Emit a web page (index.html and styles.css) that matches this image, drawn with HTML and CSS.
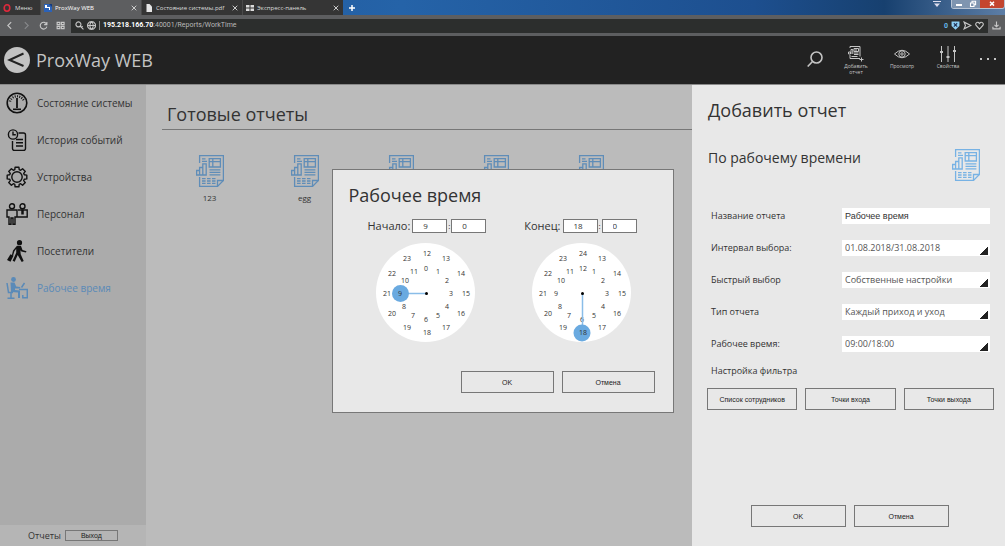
FILE: index.html
```html
<!DOCTYPE html>
<html lang="ru">
<head>
<meta charset="utf-8">
<title>ProxWay WEB</title>
<link rel="stylesheet" href="styles.css">
</head>
<body>
<svg class="defs" aria-hidden="true">
  <symbol id="report" viewBox="0 0 28 32">
    <g fill="none" stroke="currentColor" stroke-width="1.3">
      <path d="M3.6 8V.6H27.4V25.5L21.5 31.4H3.6V22"/>
      <path d="M27.4 25.5H21.5V31.4"/>
      <path d="M13.2 3.6H24.4V12H13.2zM16.8 3.6V12M13.2 6.6H24.4"/>
      <path d="M13.5 14.8H24.4M13.5 17.3H24.4M13.5 19.8H24.4"/>
      <path d="M.6 20V15.5H3.6V20zM3.6 20V12.5H6.8V20zM6.8 20V8.8H10.2V20z"/>
      <path d="M6 3.8H9.5M6 6.3H11"/>
      <path d="M6 23.6H19.5M6 26H19.5M6 28.4H19.5" stroke-dasharray="3.6 1.4"/>
    </g>
  </symbol>
</svg>

<div class="tabs">
  <button class="tab menu"><svg class="i8" viewBox="0 0 8 8"><ellipse cx="4" cy="4" rx="2.8" ry="3.2" fill="none" stroke="#e0293c" stroke-width="1.6"/></svg>Меню</button>
  <div class="tab active">
    <svg class="i8" viewBox="0 0 8 8"><rect width="8" height="8" fill="#2b62b8"/><path d="M1 1h2v2h3v3H5V4H1z" fill="#fff"/><path d="M5 0h3v3z" fill="#133a80"/></svg>
    <span class="name">ProxWay WEB</span><button class="x" aria-label="Закрыть вкладку"><svg viewBox="0 0 6 6"><path d="M.7.7l4.6 4.6M5.3.7L.7 5.3"/></svg></button>
  </div>
  <div class="tab">
    <svg class="i8" viewBox="0 0 8 8"><path d="M1.5 0h3L7 2.5V8H1.5z" fill="#e6e6e6"/></svg>
    <span class="name">Состояние системы.pdf</span><button class="x" aria-label="Закрыть вкладку"><svg viewBox="0 0 6 6"><path d="M.7.7l4.6 4.6M5.3.7L.7 5.3"/></svg></button>
  </div>
  <div class="tab">
    <svg class="i8" viewBox="0 0 8 8"><path d="M0 1h3.5v2.5H0zM4.5 1H8v2.5H4.5zM0 4.5h3.5V7H0zM4.5 4.5H8V7H4.5z" fill="#ddd"/></svg>
    <span class="name">Экспресс-панель</span><button class="x" aria-label="Закрыть вкладку"><svg viewBox="0 0 6 6"><path d="M.7.7l4.6 4.6M5.3.7L.7 5.3"/></svg></button>
  </div>
  <button class="plus" aria-label="Новая вкладка"><svg viewBox="0 0 6 6"><path d="M3 0v6M0 3h6" stroke="#fff" stroke-width="1.5"/></svg></button>
  <div class="window-controls">
    <svg class="tab-menu" viewBox="0 0 8 8"><path d="M0 1.5h8" stroke="#dde" /><path d="M1 3.4h6L4 7z" fill="#dde"/></svg>
    <div class="wbtns">
      <button aria-label="Свернуть"><svg viewBox="0 0 8 8"><path d="M1 5h6" stroke="#fff" stroke-width="2"/></svg></button>
      <button aria-label="Развернуть"><svg viewBox="0 0 8 8"><path d="M1.5 3h3.5v3.5H1.5zM3 3V1.2h3.6v3.6H5" fill="none" stroke="#fff" stroke-width="1.1"/></svg></button>
      <button class="close" aria-label="Закрыть"><svg viewBox="0 0 8 8"><path d="M2 1.8l4 3.8M6 1.8L2 5.6" stroke="#fff" stroke-width="1.5"/></svg></button>
    </div>
  </div>
</div>

<div class="address">
  <button class="nav" aria-label="Назад"><svg viewBox="0 0 8 8"><path d="M5.5 1L2.5 4l3 3"/></svg></button>
  <button class="nav dim" aria-label="Вперёд"><svg viewBox="0 0 8 8"><path d="M2.5 1l3 3-3 3"/></svg></button>
  <button class="nav" aria-label="Обновить"><svg viewBox="0 0 8 8"><path d="M6.8 2.8A3 3 0 1 0 7 5M7 .8v2.4H4.6"/></svg></button>
  <button class="nav" aria-label="Экспресс-панель"><svg viewBox="0 0 8 8"><path d="M1 1.2h2.4v2H1zM4.8 1.2h2.4v2H4.8zM1 4.8h2.4v2H1zM4.8 4.8h2.4v2H4.8z"/></svg></button>
  <div class="url">
    <svg class="i8" viewBox="0 0 8 8"><path d="M3 .8a2.2 2.2 0 1 0 .1 0zM4.5 4.5l3 3M5.6 5.6L6.8 4.7"/></svg>
    <svg class="i8" viewBox="0 0 8 8"><path d="M4 .5a3.5 3.5 0 1 0 .1 0zM.5 4h7M4 .5C2 2.5 2 5.5 4 7.5C6 5.5 6 2.5 4 .5"/></svg>
    <span class="addr"><b>195.218.166.70</b>:40001/Reports/WorkTime</span>
    <span class="blocked">0</span>
    <svg class="i8" viewBox="0 0 8 8"><path class="shield" d="M.5.5h7v4L4 7.8.5 4.5z"/><path d="M2.500 2l3 3M5.500 2l-3 3" stroke="#235"/></svg>
    <svg class="i8" viewBox="0 0 8 8"><path d="M1 1l6 3-6 3 1.200-3z"/></svg>
    <svg class="i8" viewBox="0 0 8 8"><path d="M4 7.200L1 4C-.4 2 2.500-.2 4 2.200C5.500-.2 8.400 2 7 4z"/></svg>
  </div>
  <button class="nav" aria-label="Загрузки"><svg viewBox="0 0 8 8"><path d="M4 .5v4.500M2.200 3.500L4 5.200l1.800-1.700M.8 5v2h6.400V5"/></svg></button>
</div>

<div class="app">
  <header class="header">
    <a class="brand" href="#">
      <svg viewBox="0 0 26 26"><circle cx="13" cy="13" r="13" fill="#c2c2c2"/><path d="M19.500 6.500L5.500 13l14 6" fill="none" stroke="#222" stroke-width="2"/></svg>
      <span>ProxWay WEB</span>
    </a>
    <nav class="tools">
      <button class="tool search" aria-label="Поиск"><svg viewBox="0 0 16 16"><circle cx="9.500" cy="6.500" r="5.500"/><path d="M5.500 10.500L.7 15.500"/></svg></button>
      <button class="tool"><svg viewBox="0 0 16 16"><path d="M2 2V.5h10v10M12 12.500H2V9M.5 8V6h2v2zM3 8V3.500h1.800V8M6 2.500h4.500v3H6zM8 2.500v3M6 7h4.500M6 8.500h4.500M3.500 10.500h6M13.500 11.500v4M11.500 13.500h4"/></svg><span>Добавить<br>отчет</span></button>
      <button class="tool"><svg viewBox="0 0 16 16"><path d="M.5 8Q8 .5 15.500 8Q8 15.500.5 8z"/><circle cx="8" cy="8" r="3.200"/><circle cx="8" cy="8" r="1.200"/></svg><span>Просмотр</span></button>
      <button class="tool"><svg viewBox="0 0 16 16"><path d="M1.500 0v16M8 0v16M14.500 0v16"/><path d="M0 6h3M6.500 11h3M13 5h3" stroke-width="2"/></svg><span>Свойства</span></button>
      <button class="tool more" aria-label="Ещё"><svg viewBox="0 0 16 16"><path d="M0 7h2v2H0zM7 7h2v2H7zM14 7h2v2h-2z"/></svg></button>
    </nav>
  </header>

  <div class="body">
    <aside class="sidebar">
      <nav class="links">
        <a href="#"><svg viewBox="0 0 22 22"><circle cx="11" cy="11" r="9.800" stroke-width="1.600"/><path d="M4 9.500A7.300 7.300 0 0 1 18 9.500" stroke-width="2.200" stroke-dasharray="1 1.300"/><path d="M11 6v10" stroke-width="1.800"/><path d="M7 17.300h8" stroke-width="1.600"/></svg>Состояние системы</a>
        <a href="#"><svg viewBox="0 0 22 22"><circle cx="7" cy="5.500" r="4.600"/><path d="M7 2.500v3.300h2.800M12.500 4h5q2 0 2 2v13.500q0 2-2 2h-9q-2 0-2-2V12M10 10.500h7M10 13.700h7M10 17h7"/></svg>История событий</a>
        <a href="#"><svg viewBox="0 0 22 22"><circle cx="11" cy="11" r="5.200"/><path stroke-linejoin="round" d="M18.300 8.800L20.800 9.100V12.900L18.300 13.200L17.700 14.600L19.300 16.600L16.600 19.300L14.600 17.700L13.200 18.300L12.900 20.800H9.100L8.800 18.300L7.400 17.700L5.400 19.300L2.700 16.600L4.300 14.600L3.700 13.200L1.200 12.900V9.100L3.700 8.800L4.300 7.400L2.700 5.400L5.400 2.700L7.400 4.300L8.800 3.700L9.100 1.200H12.900L13.200 3.700L14.600 4.300L16.600 2.700L19.300 5.400L17.700 7.400z"/></svg>Устройства</a>
        <a href="#"><svg viewBox="0 0 22 22"><circle cx="6" cy="3.200" r="2.500"/><circle cx="16.500" cy="3.200" r="2.500"/><path d="M3 21.200V14H1V7h10v7H9v7.200H7V15H5v6.200zM11.500 14h9.700V7h-9.200"/><path d="M16.500 6.500v5" stroke-width="2.500"/></svg>Персонал</a>
        <a href="#"><svg viewBox="0 0 22 22"><g fill="currentColor" stroke="none"><circle cx="13.500" cy="2.700" r="2.600"/><path d="M11 5.700l4 .4 1.500 4 4 1.200-.6 1.300-4.500-1-1-1.300.3 4 3 6.700-2 1-4-7-3 6.700-2.100-.9 3.600-8V8.700L8.300 11.500 7 16l-1.200-.4L7 10.500z"/><path d="M4.500 14.200l3 1.500-3 6L1 20z"/></g></svg>Посетители</a>
        <a class="current" href="#"><svg viewBox="0 0 22 22"><g fill="currentColor" stroke="none"><circle cx="7.500" cy="2.500" r="2.400"/><path d="M4.500 5.500h4l1.700 4 4 .6v1.500L9 11.500V13l5 .5v7.500h-2v-5.500L5 15z"/></g><path d="M1 6l1.500 9.500H7M5 16v5M1.500 21.200h7M15.500 10.500L18.500 6M13 12.500h8.300v8.300h-4.500V18" stroke-width="1.500"/></svg>Рабочее время</a>
      </nav>
      <div class="foot"><span>Отчеты</span><button class="btn">Выход</button></div>
    </aside>

    <main class="content">
      <h1>Готовые отчеты</h1>
      <div class="reports">
        <a href="#"><svg><use href="#report"/></svg>123</a>
        <a href="#"><svg><use href="#report"/></svg>egg</a>
        <a href="#" aria-label="Отчет"><svg><use href="#report"/></svg></a>
        <a href="#" aria-label="Отчет"><svg><use href="#report"/></svg></a>
        <a href="#" aria-label="Отчет"><svg><use href="#report"/></svg></a>
      </div>
    </main>

    <form class="panel">
      <h2>Добавить отчет</h2>
      <div class="kind"><h3>По рабочему времени</h3><svg><use href="#report"/></svg></div>
      <div class="fields">
        <label for="f1">Название отчета</label><input id="f1" type="text" value="Рабочее время">
        <label for="f2">Интервал выбора:</label><select id="f2"><option>01.08.2018/31.08.2018</option></select>
        <label for="f3">Быстрый выбор</label><select id="f3"><option>Собственные настройки</option></select>
        <label for="f4">Тип отчета</label><select id="f4"><option>Каждый приход и уход</option></select>
        <label for="f5">Рабочее время:</label><select id="f5"><option>09:00/18:00</option></select>
      </div>
      <p class="filter">Настройка фильтра</p>
      <div class="filters">
        <button class="btn" type="button">Список сотрудников</button>
        <button class="btn" type="button">Точки входа</button>
        <button class="btn" type="button">Точки выхода</button>
      </div>
      <div class="actions">
        <button class="btn" type="button">OK</button>
        <button class="btn" type="button">Отмена</button>
      </div>
    </form>
  </div>

  <div class="overlay">
    <form class="dialog" role="dialog" aria-labelledby="dt">
      <h2 id="dt">Рабочее время</h2>
      <div class="times">
        <div class="time">
          <div class="entry"><label for="h1">Начало:</label><input id="h1" value="9"><span>:</span><input aria-label="Минуты начала" value="0"></div>
          <svg class="clock" viewBox="0 0 99 99">
            <circle cx="49.500" cy="49.500" r="49.500" fill="#fff"/>
            <path class="hand" d="M50.500 50.500H25"/><circle class="pick" cx="24.500" cy="50.500" r="8.500"/><circle cx="50.500" cy="50.500" r="1.500"/>
            <text x="51" y="13">12</text><text x="70" y="18">13</text><text x="85" y="33">14</text><text x="90" y="53">15</text><text x="85" y="73">16</text><text x="70" y="87">17</text><text x="51" y="92">18</text><text x="31" y="87">19</text><text x="16" y="73">20</text><text x="11" y="53">21</text><text x="16" y="33">22</text><text x="31" y="18">23</text>
            <text x="50" y="28">0</text><text x="62" y="31">1</text><text x="71" y="40">2</text><text x="75" y="53">3</text><text x="71" y="66">4</text><text x="62" y="75">5</text><text x="50" y="79">6</text><text x="37" y="75">7</text><text x="28" y="66">8</text><text x="24" y="53">9</text><text x="29" y="40">10</text><text x="38" y="31">11</text>
          </svg>
        </div>
        <div class="time">
          <div class="entry"><label for="h2">Конец:</label><input id="h2" value="18"><span>:</span><input aria-label="Минуты конца" value="0"></div>
          <svg class="clock" viewBox="0 0 99 99">
            <circle cx="49.500" cy="49.500" r="49.500" fill="#fff"/>
            <text x="50" y="79">6</text>
            <path class="hand" d="M50.500 50.500V82"/><circle class="pick" cx="50" cy="90" r="8.500"/><circle cx="50.500" cy="50.500" r="1.500"/>
            <text x="51" y="13">24</text><text x="70" y="18">13</text><text x="85" y="33">14</text><text x="90" y="53">15</text><text x="85" y="73">16</text><text x="70" y="87">17</text><text x="51" y="92">18</text><text x="31" y="87">19</text><text x="16" y="73">20</text><text x="11" y="53">21</text><text x="16" y="33">22</text><text x="31" y="18">23</text>
            <text x="51" y="28">12</text><text x="62" y="31">1</text><text x="71" y="40">2</text><text x="75" y="53">3</text><text x="71" y="66">4</text><text x="62" y="75">5</text><text x="37" y="75">7</text><text x="28" y="66">8</text><text x="24" y="53">9</text><text x="29" y="40">10</text><text x="38" y="31">11</text>
          </svg>
        </div>
      </div>
      <div class="actions">
        <button class="btn" type="button">OK</button>
        <button class="btn" type="button">Отмена</button>
      </div>
    </form>
  </div>
</div>
</body>
</html>
```

FILE: styles.css
```css
* { box-sizing: border-box; }
body {
  margin: 0;
  height: 100vh;
  padding-bottom: 2px;
  display: flex;
  flex-direction: column;
  overflow: hidden;
  background: #fff;
  color: #333;
  font-family: "Open Sans", "Noto Sans", sans-serif;
}
button, input, select { font-family: inherit; margin: 0; padding: 0; border: 0; border-radius: 0; background: none; color: inherit; }
a { color: inherit; text-decoration: none; }
h1, h2, h3, p { margin: 0; font-weight: 400; }
svg { flex: none; display: block; }
.defs { position: absolute; width: 0; height: 0; }
.i8 { width: 8px; height: 8px; }

.tabs {
  flex: none;
  display: flex;
  height: 15px;
  background: linear-gradient(90deg, #1f5596 0%, #2563a8 40%, #1d4f8f 75%, #17406f 88%, #5d7ea6 100%);
  color: #ddd;
  font-size: 6px;
}
.tab { display: flex; align-items: center; gap: 3px; width: 101px; padding: 0 4px 0 3px; background: #353535; border-left: 1px solid #4a4a4a; color: #ddd; }
.tab.menu { width: 40px; gap: 4px; font-size: 6px; border: 0; }
.tab.active { background: #5d5e60; color: #fff; }
.name { flex: 1; white-space: nowrap; }
.x svg, .plus svg { width: 6px; height: 6px; }
.x svg { fill: none; stroke: #ccc; stroke-width: 1; }
.plus { display: grid; place-items: center; width: 18px; }
.window-controls { margin-left: auto; display: flex; align-items: flex-start; gap: 10px; }
.tab-menu { width: 8px; height: 8px; }
.wbtns { display: flex; height: 9px; border: 1px solid #b8c4d4; border-top: 0; border-radius: 0 0 3px 3px; overflow: hidden; }
.wbtns button { display: grid; place-items: center; width: 14px; background: #7f95b0; }
.wbtns svg { width: 8px; height: 8px; }
.wbtns .close { width: 24px; background: #c4452f; }

.address { flex: none; display: flex; align-items: center; height: 21px; padding: 0 0 0 1px; background: #5d5e60; }
.nav { display: grid; place-items: center; width: 17px; }
.nav svg, .url svg { width: 9px; height: 9px; fill: none; stroke: #c8c8c8; stroke-width: 1; }
.nav.dim svg { stroke: #88898b; }
.url { flex: 1; display: flex; align-items: center; gap: 3px; height: 14px; margin-left: 2px; padding: 0 4px; background: #2c2e2d; color: #b9b9b9; font-family: Roboto, "Open Sans", sans-serif; font-size: 7px; }
.addr { flex: 1; padding-left: 3px; border-left: 1px solid #888; line-height: 9px; }
.addr b { color: #fff; }
.blocked { color: #65b9ee; font-weight: 700; }
.url .shield { fill: #8ed0f5; stroke: none; }

.app { position: relative; flex: 1; min-height: 0; display: flex; flex-direction: column; }
.header { flex: none; display: flex; justify-content: space-between; height: 48px; padding: 0 0 0 4px; background: #222; color: #c4c4c4; }
.brand { display: flex; align-items: center; gap: 6px; font-size: 18px; }
.brand svg { width: 26px; height: 26px; }
.tools { display: flex; }
.tool { display: flex; flex-direction: column; align-items: center; width: 46px; padding-top: 10px; font-size: 5px; line-height: 6px; color: #c4c4c4; }
.tool svg { width: 16px; height: 16px; margin-bottom: 1px; fill: none; stroke: currentColor; stroke-width: 1; }
.tool.search { width: 36px; padding-top: 15px; }
.tool.search svg { stroke-width: 1.6; }
.tool.more { width: 34px; padding-top: 15px; }
.tool.more svg { fill: currentColor; stroke: none; }

.body { flex: 1; min-height: 0; display: flex; background: #bbb; border-top: 1px solid #8a8a8a; }
.sidebar { flex: none; width: 146px; display: flex; flex-direction: column; justify-content: space-between; background: #ababab; }
.links { display: flex; flex-direction: column; }
.links a { display: flex; align-items: center; gap: 9px; height: 37px; padding: 0 0 2px 6px; font-size: 10px; white-space: nowrap; }
.links svg { width: 22px; height: 22px; fill: none; stroke: currentColor; stroke-width: 1.4; color: #111; }
.links .current, .links .current svg { color: #5a8ab8; }
.foot { display: flex; align-items: center; gap: 4px; height: 21px; padding-left: 28px; background: #b5b5b5; font-size: 9px; }
.btn { height: 22px; border: 1px solid #777; font-family: "Liberation Sans", Arial, sans-serif; font-size: 7px; color: #222; }
.foot .btn { width: 53px; height: 11px; line-height: 9px; }

.content { flex: 1; min-width: 0; padding: 17px 0 0 16px; }
.content h1 { padding: 0 0 0 5px; height: 28px; line-height: 25px; border-bottom: 1px solid #777; font-size: 18px; }
.reports { display: grid; grid-template-columns: repeat(auto-fill, 95px); padding-top: 25px; }
.reports a { display: flex; flex-direction: column; align-items: center; gap: 5px; font-size: 8px; line-height: 11px; }
.reports svg { width: 28px; height: 32px; color: #5f8db8; }

.panel { flex: none; width: 313px; display: flex; flex-direction: column; padding: 10px 11px 19px 15px; background: #e8e8e8; }
.panel h2, .dialog h2 { font-size: 18px; line-height: 30px; }
.panel h2 { padding-left: 1px; }
.kind { display: flex; justify-content: space-between; padding: 24px 14px 0 1px; }
.kind h3 { font-size: 14px; line-height: 18px; }
.kind svg { width: 28px; height: 32px; color: #77b2e4; }
.fields { display: grid; grid-template-columns: 1fr 148px; gap: 16px 0; padding: 27px 4px 0 4px; font-size: 9px; line-height: 16px; }
.fields input, .fields select { width: 100%; height: 16px; padding: 0 3px; background: #fff; font-size: 9px; line-height: 14px; }
.fields input { font-family: "Liberation Sans", Arial, sans-serif; }
.fields select { appearance: none; background: linear-gradient(135deg, transparent 50%, #222 50%) right 2px bottom 1px / 8px 8px no-repeat #fff; color: #555; }
.filter { padding: 11px 4px 9px; font-size: 9px; line-height: 16px; }
.filters { display: flex; gap: 8px; }
.filters .btn { flex: 1; }
.actions { display: flex; gap: 8px; }
.panel .actions { margin-top: auto; justify-content: center; padding-right: 2px; }
.actions .btn { width: 95px; }

.overlay { position: absolute; inset: 0; display: grid; place-items: center; pointer-events: none; }
.dialog { width: 342px; padding: 10px 18px 19px 16px; border: 1px solid #777; background: #e8e8e8; pointer-events: auto; }
.times { display: flex; justify-content: space-between; padding: 8px 18px 0 19px; }
.time { display: flex; flex-direction: column; gap: 10px; }
.entry { display: flex; align-items: center; height: 15px; font-size: 11px; }
.entry label { margin-right: 2px; }
.entry input { width: 35px; height: 14px; padding: 0 0 0 10px; border: 1px solid #777; background: #fff; font-size: 8px; }
.entry span { width: 4px; text-align: center; font-size: 8px; }
.clock { width: 99px; height: 99px; margin-left: 8px; }
.clock text { font-size: 7px; text-anchor: middle; fill: #333; }
.hand { stroke: #8abde8; stroke-width: 1.5; fill: none; }
.pick { fill: #6aaae0; }
.dialog .actions { justify-content: flex-end; padding-top: 29px; }
.dialog .actions .btn { width: 93px; }
```
